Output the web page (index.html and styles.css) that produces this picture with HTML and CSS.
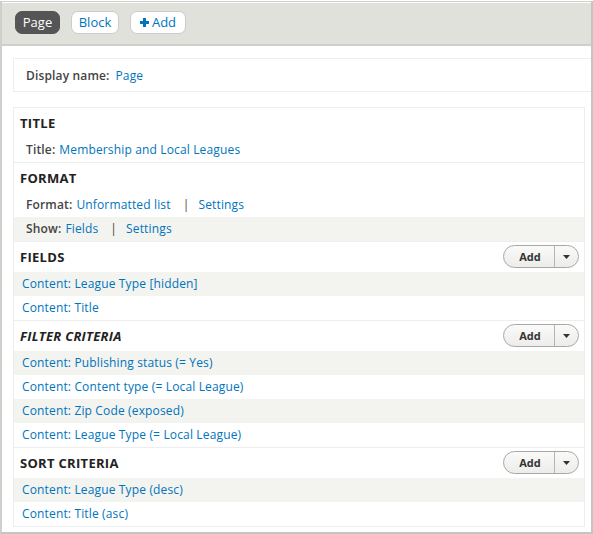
FILE: index.html
```html
<!DOCTYPE html>
<html>
<head>
<meta charset="utf-8">
<link rel="stylesheet" href="styles.css">
</head>
<body>
<div class="frame">
  <div class="tabs">
    <span class="tab active">Page</span>
    <span class="tab block">Block</span>
    <span class="tab add"><svg class="plus" width="9" height="9" viewBox="0 0 9 9"><path d="M3 0h3v3h3v3H6v3H3V6H0V3h3z" fill="#0074bd"/></svg>Add</span>
  </div>
  <div class="content">
    <div class="display-name"><span class="label">Display name:</span> <a>Page</a></div>
    <div class="box">
      <div class="section">
        <div class="heading"><span>TITLE</span></div>
        <div class="row indent"><span class="label">Title:</span> <a>Membership and Local Leagues</a></div>
      </div>
      <div class="section">
        <div class="heading"><span>FORMAT</span></div>
        <div class="row indent"><span class="label">Format:</span> <a>Unformatted list</a><span class="sep">|</span><a>Settings</a></div>
        <div class="row indent alt"><span class="label">Show:</span> <a>Fields</a><span class="sep">|</span><a>Settings</a></div>
      </div>
      <div class="section">
        <div class="heading"><span>FIELDS</span><span class="split"><span class="split-main">Add</span><span class="split-arrow"><svg width="7" height="4" viewBox="0 0 7 4"><path d="M0 0h7L3.5 4z" fill="#333"/></svg></span></span></div>
        <div class="row alt"><a>Content: League Type [hidden]</a></div>
        <div class="row"><a>Content: Title</a></div>
      </div>
      <div class="section">
        <div class="heading"><span class="italic">FILTER CRITERIA</span><span class="split"><span class="split-main">Add</span><span class="split-arrow"><svg width="7" height="4" viewBox="0 0 7 4"><path d="M0 0h7L3.5 4z" fill="#333"/></svg></span></span></div>
        <div class="row alt"><a>Content: Publishing status (= Yes)</a></div>
        <div class="row"><a>Content: Content type (= Local League)</a></div>
        <div class="row alt"><a>Content: Zip Code (exposed)</a></div>
        <div class="row"><a>Content: League Type (= Local League)</a></div>
      </div>
      <div class="section">
        <div class="heading"><span>SORT CRITERIA</span><span class="split"><span class="split-main">Add</span><span class="split-arrow"><svg width="7" height="4" viewBox="0 0 7 4"><path d="M0 0h7L3.5 4z" fill="#333"/></svg></span></span></div>
        <div class="row alt"><a>Content: League Type (desc)</a></div>
        <div class="row"><a>Content: Title (asc)</a></div>
      </div>
    </div>
  </div>
</div>
</body>
</html>
```

FILE: styles.css
```css
html, body {
  margin: 0;
  padding: 0;
  background: #fff;
}
body {
  font-family: "Open Sans", "DejaVu Sans", sans-serif;
  font-size: 12px;
  letter-spacing: 0.15px;
  color: #333;
}
.frame {
  margin-top: 1px;
  width: 589px;
  height: 530px;
  border-top: 1px solid #cfcfcb;
  border-left: 2px solid #cfcfcb;
  border-right: 2px solid #c4c4c4;
  border-bottom: 2px solid #c4c4c4;
  box-sizing: content-box;
  overflow: hidden;
}
.tabs {
  background: #e1e1dc;
  border-top: 1px solid #fff;
  border-bottom: 2px solid #cfcfcb;
  display: flex;
  align-items: flex-start;
  padding: 8px 0 0 13px;
  gap: 11px;
  box-sizing: border-box;
  height: 44px;
}
.tab {
  display: inline-flex;
  align-items: center;
  justify-content: center;
  height: 23px;
  box-sizing: border-box;
  border-radius: 7px;
  background: #fff;
  border: 1px solid #ccc;
  color: #0074bd;
  font-size: 13px;
  letter-spacing: 0;
  padding-bottom: 1px;
}
.tab.active {
  background: #555;
  border-color: #555;
  color: #fff;
  width: 45px;
}
.tab.block { width: 48px; }
.tab.add { width: 56px; }
.plus { margin-right: 3px; }
.content {
  padding: 12px 0 0 11px;
}
.display-name {
  border: 1px solid #eee;
  border-right: none;
  height: 32px;
  display: flex;
  align-items: center;
  padding-left: 12px;
  margin-bottom: 15px;
}
.display-name .label { margin-right: 6px; }
.label {
  font-weight: 600;
  color: #444;
  margin-right: 4px;
}
a {
  color: #0074bd;
  text-decoration: none;
}
.box {
  width: 572px;
  border: 1px solid #eee;
  box-sizing: border-box;
  height: 420px;
}
.section + .section {
  border-top: 1px solid #eee;
}
.heading {
  height: 30px;
  display: flex;
  align-items: center;
  justify-content: space-between;
  padding: 0 5px 1px 6px;
  box-sizing: border-box;
  font-weight: bold;
  font-size: 13px;
  letter-spacing: 0.3px;
  color: #222;
}
.italic { font-style: italic; }
.row {
  height: 24px;
  display: flex;
  align-items: center;
  padding-left: 8px;
  padding-bottom: 1px;
  box-sizing: border-box;
}
.row.indent { padding-left: 12px; }
.row.alt { background: #f3f3ef; }
.sep {
  margin: 0 9px 0 12px;
  color: #444;
}
.split {
  display: inline-flex;
  height: 23px;
  width: 76px;
  box-sizing: border-box;
  border: 1px solid #a8a8a8;
  border-radius: 12px;
  background: linear-gradient(#fafaf8, #ececea);
  font-size: 11px;
  letter-spacing: 0;
  overflow: hidden;
  margin-top: 0;
}
.split-main {
  width: 51px;
  display: flex;
  align-items: center;
  justify-content: center;
  border-right: 1px solid #b5b5b5;
  font-weight: bold;
  color: #333;
  padding-left: 2px;
  box-sizing: border-box;
}
.split-arrow {
  flex: 1;
  display: flex;
  align-items: center;
  justify-content: center;
}
```
